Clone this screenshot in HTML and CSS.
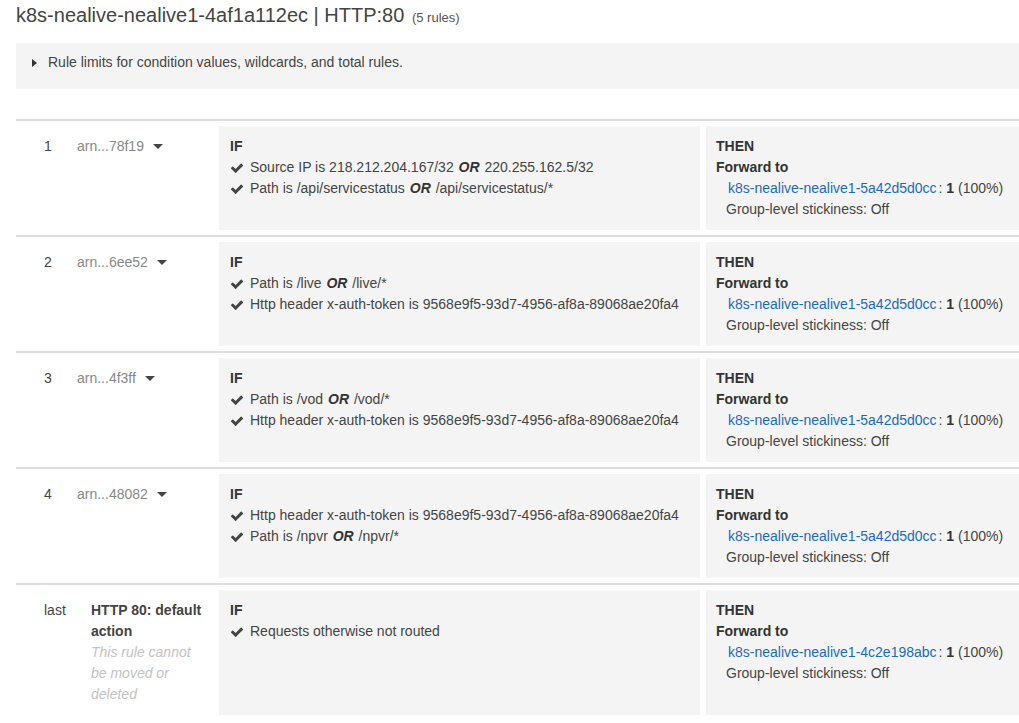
FILE: index.html
```html
<!DOCTYPE html>
<html>
<head>
<meta charset="utf-8">
<link rel="stylesheet" href="styles.css">
</head>
<body>
<div class="page">
  <h1 class="title">k8s-nealive-nealive1-4af1a112ec | HTTP:80 <span class="count">(5 rules)</span></h1>
  <div class="limits"><span class="tri"></span><span>Rule limits for condition values, wildcards, and total rules.</span></div>

  <div class="rules">
    <div class="rule">
      <div class="meta"><span class="num">1</span><span class="arn">arn...78f19<span class="caret"></span></span></div>
      <div class="box cond">
        <div class="hd">IF</div>
        <div class="ck"><svg class="chk" viewBox="0 0 1792 1792"><path d="M1671 566q0 40-28 68l-724 724-136 136q-28 28-68 28t-68-28l-136-136-362-362q-28-28-28-68t28-68l136-136q28-28 68-28t68 28l294 295 656-657q28-28 68-28t68 28l136 136q28 28 28 68z"/></svg><span>Source IP is 218.212.204.167/32 <b class="or">OR</b> 220.255.162.5/32</span></div>
        <div class="ck"><svg class="chk" viewBox="0 0 1792 1792"><path d="M1671 566q0 40-28 68l-724 724-136 136q-28 28-68 28t-68-28l-136-136-362-362q-28-28-28-68t28-68l136-136q28-28 68-28t68 28l294 295 656-657q28-28 68-28t68 28l136 136q28 28 28 68z"/></svg><span>Path is /api/servicestatus <b class="or">OR</b> /api/servicestatus/*</span></div>
      </div>
      <div class="box act">
        <div class="hd">THEN</div>
        <div class="hd">Forward to</div>
        <div class="tg"><a class="lnk">k8s-nealive-nealive1-5a42d5d0cc</a>: <b>1</b> (100%)</div>
        <div class="st">Group-level stickiness: Off</div>
      </div>
    </div>

    <div class="rule">
      <div class="meta"><span class="num">2</span><span class="arn">arn...6ee52<span class="caret"></span></span></div>
      <div class="box cond">
        <div class="hd">IF</div>
        <div class="ck"><svg class="chk" viewBox="0 0 1792 1792"><path d="M1671 566q0 40-28 68l-724 724-136 136q-28 28-68 28t-68-28l-136-136-362-362q-28-28-28-68t28-68l136-136q28-28 68-28t68 28l294 295 656-657q28-28 68-28t68 28l136 136q28 28 28 68z"/></svg><span>Path is /live <b class="or">OR</b> /live/*</span></div>
        <div class="ck"><svg class="chk" viewBox="0 0 1792 1792"><path d="M1671 566q0 40-28 68l-724 724-136 136q-28 28-68 28t-68-28l-136-136-362-362q-28-28-28-68t28-68l136-136q28-28 68-28t68 28l294 295 656-657q28-28 68-28t68 28l136 136q28 28 28 68z"/></svg><span>Http header x-auth-token is 9568e9f5-93d7-4956-af8a-89068ae20fa4</span></div>
      </div>
      <div class="box act">
        <div class="hd">THEN</div>
        <div class="hd">Forward to</div>
        <div class="tg"><a class="lnk">k8s-nealive-nealive1-5a42d5d0cc</a>: <b>1</b> (100%)</div>
        <div class="st">Group-level stickiness: Off</div>
      </div>
    </div>

    <div class="rule">
      <div class="meta"><span class="num">3</span><span class="arn">arn...4f3ff<span class="caret"></span></span></div>
      <div class="box cond">
        <div class="hd">IF</div>
        <div class="ck"><svg class="chk" viewBox="0 0 1792 1792"><path d="M1671 566q0 40-28 68l-724 724-136 136q-28 28-68 28t-68-28l-136-136-362-362q-28-28-28-68t28-68l136-136q28-28 68-28t68 28l294 295 656-657q28-28 68-28t68 28l136 136q28 28 28 68z"/></svg><span>Path is /vod <b class="or">OR</b> /vod/*</span></div>
        <div class="ck"><svg class="chk" viewBox="0 0 1792 1792"><path d="M1671 566q0 40-28 68l-724 724-136 136q-28 28-68 28t-68-28l-136-136-362-362q-28-28-28-68t28-68l136-136q28-28 68-28t68 28l294 295 656-657q28-28 68-28t68 28l136 136q28 28 28 68z"/></svg><span>Http header x-auth-token is 9568e9f5-93d7-4956-af8a-89068ae20fa4</span></div>
      </div>
      <div class="box act">
        <div class="hd">THEN</div>
        <div class="hd">Forward to</div>
        <div class="tg"><a class="lnk">k8s-nealive-nealive1-5a42d5d0cc</a>: <b>1</b> (100%)</div>
        <div class="st">Group-level stickiness: Off</div>
      </div>
    </div>

    <div class="rule">
      <div class="meta"><span class="num">4</span><span class="arn">arn...48082<span class="caret"></span></span></div>
      <div class="box cond">
        <div class="hd">IF</div>
        <div class="ck"><svg class="chk" viewBox="0 0 1792 1792"><path d="M1671 566q0 40-28 68l-724 724-136 136q-28 28-68 28t-68-28l-136-136-362-362q-28-28-28-68t28-68l136-136q28-28 68-28t68 28l294 295 656-657q28-28 68-28t68 28l136 136q28 28 28 68z"/></svg><span>Http header x-auth-token is 9568e9f5-93d7-4956-af8a-89068ae20fa4</span></div>
        <div class="ck"><svg class="chk" viewBox="0 0 1792 1792"><path d="M1671 566q0 40-28 68l-724 724-136 136q-28 28-68 28t-68-28l-136-136-362-362q-28-28-28-68t28-68l136-136q28-28 68-28t68 28l294 295 656-657q28-28 68-28t68 28l136 136q28 28 28 68z"/></svg><span>Path is /npvr <b class="or">OR</b> /npvr/*</span></div>
      </div>
      <div class="box act">
        <div class="hd">THEN</div>
        <div class="hd">Forward to</div>
        <div class="tg"><a class="lnk">k8s-nealive-nealive1-5a42d5d0cc</a>: <b>1</b> (100%)</div>
        <div class="st">Group-level stickiness: Off</div>
      </div>
    </div>

    <div class="rule">
      <div class="meta"><span class="num">last</span>
        <div class="dflt"><div class="dname">HTTP 80: default action</div><div class="note">This rule cannot be moved or deleted</div></div>
      </div>
      <div class="box cond">
        <div class="hd">IF</div>
        <div class="ck"><svg class="chk" viewBox="0 0 1792 1792"><path d="M1671 566q0 40-28 68l-724 724-136 136q-28 28-68 28t-68-28l-136-136-362-362q-28-28-28-68t28-68l136-136q28-28 68-28t68 28l294 295 656-657q28-28 68-28t68 28l136 136q28 28 28 68z"/></svg><span>Requests otherwise not routed</span></div>
      </div>
      <div class="box act">
        <div class="hd">THEN</div>
        <div class="hd">Forward to</div>
        <div class="tg"><a class="lnk">k8s-nealive-nealive1-4c2e198abc</a>: <b>1</b> (100%)</div>
        <div class="st">Group-level stickiness: Off</div>
      </div>
    </div>
  </div>
</div>
</body>
</html>
```

FILE: styles.css
```css
html, body {
  margin: 0;
  padding: 0;
  background: #fff;
}
body {
  font-family: "Liberation Sans", Arial, sans-serif;
  font-size: 14px;
  line-height: 21px;
  color: #444;
  overflow: hidden;
}
.page {
  padding: 3px 0 0 16px;
  width: 1003px;
}
.title {
  margin: 0 0 13px 0;
  font-size: 20px;
  font-weight: normal;
  line-height: 24px;
  color: #444;
}
.count {
  font-size: 13px;
  color: #555;
  margin-left: 2px;
}
.limits {
  background: #f4f4f4;
  padding: 9px 16px 16px 16px;
  display: flex;
  align-items: center;
  color: #444;
}
.tri {
  width: 0;
  height: 0;
  border-top: 4px solid transparent;
  border-bottom: 4px solid transparent;
  border-left: 5px solid #333;
  margin-right: 11px;
}
.rules {
  margin-top: 30px;
}
.rule {
  display: flex;
  border-top: 2px solid #ddd;
  padding: 5px 0;
}
.meta {
  width: 203px;
  box-sizing: border-box;
  padding: 10px 0 10px 28px;
  display: flex;
  align-items: flex-start;
  flex: none;
}
.num {
  width: 47px;
  flex: none;
}
.arn {
  margin-left: -14px;
  color: #888;
  display: flex;
  align-items: center;
}
.caret {
  width: 0;
  height: 0;
  border-left: 5px solid transparent;
  border-right: 5px solid transparent;
  border-top: 5px solid #444;
  margin-left: 9px;
  margin-top: -1px;
}
.dflt {
  width: 115px;
}
.dname {
  font-weight: bold;
  color: #444;
}
.note {
  font-style: italic;
  color: #c2c2c2;
}
.box {
  background: #f4f4f4;
  padding: 10px;
  box-sizing: border-box;
}
.cond {
  width: 481px;
  flex: none;
  padding-left: 11px;
}
.act {
  flex: 1;
  margin-left: 6px;
}
.hd {
  font-weight: bold;
  color: #333;
}
.ck {
  display: flex;
  align-items: center;
}
.chk {
  width: 14px;
  height: 14px;
  fill: #444;
  margin-right: 6px;
  flex: none;
}
.or {
  font-style: italic;
  color: #333;
  margin: 0 1px;
}
.tg {
  padding-left: 12px;
}
.lnk {
  color: #1b6ac0;
  text-decoration: none;
  margin-right: 2px;
}
.tg b {
  color: #333;
}
.st {
  padding-left: 10px;
}
```
